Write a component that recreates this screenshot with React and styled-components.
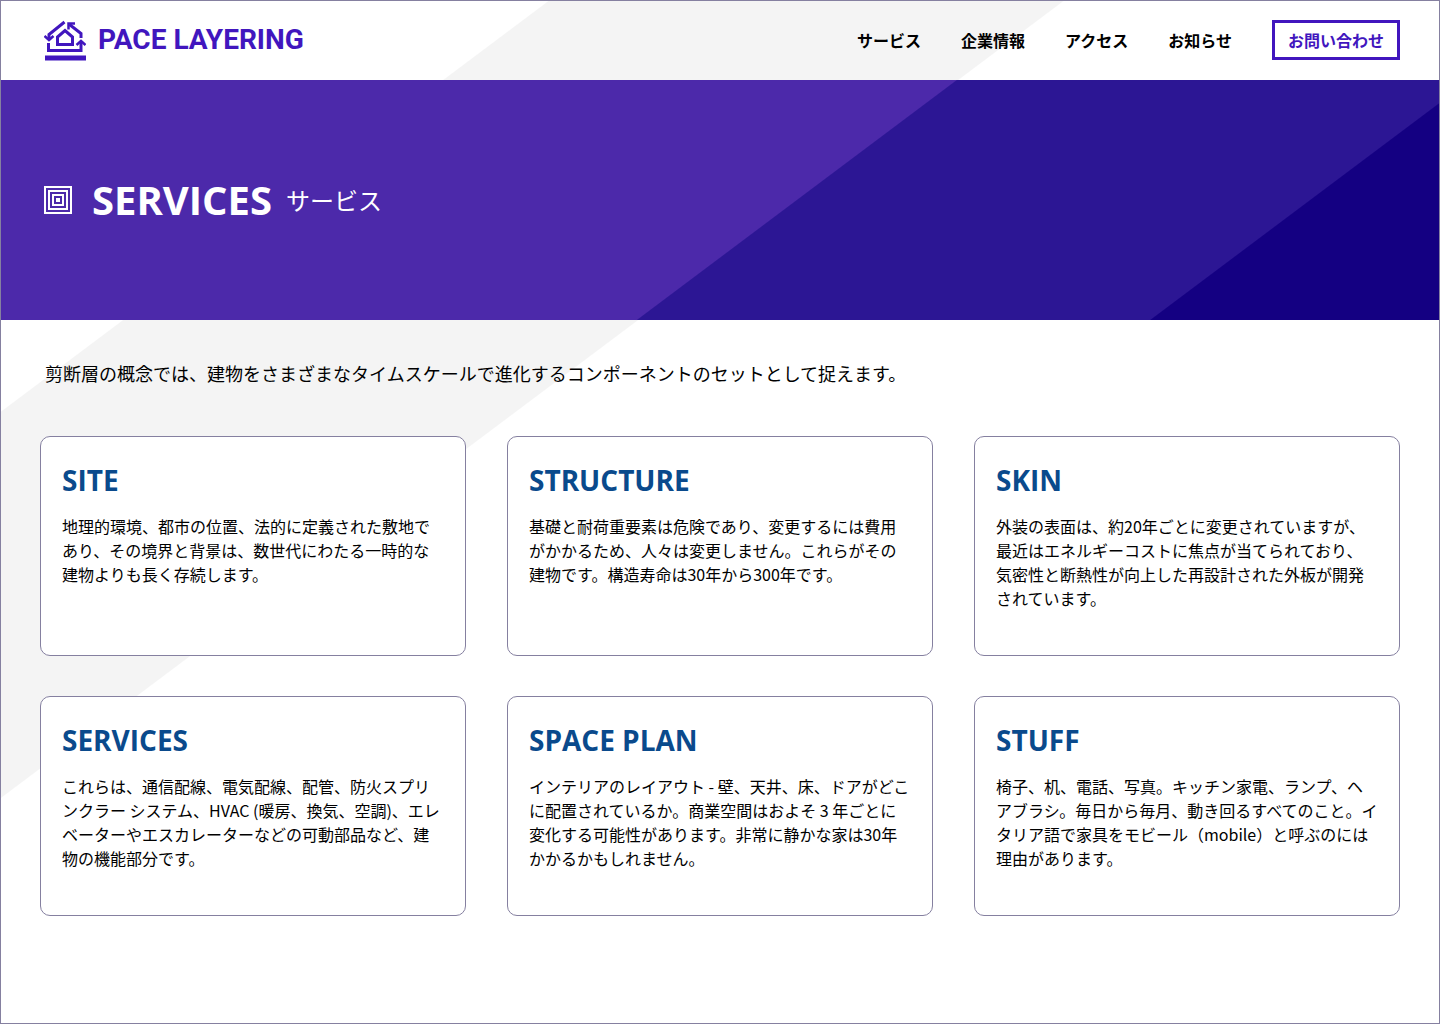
import React from "react";
import styled, { createGlobalStyle } from "styled-components";

const brand = "#4116be";
const line = "#8580a0";
const jp = `"Noto Sans CJK JP", sans-serif`;
const latin = `"Open Sans", "Noto Sans CJK JP", sans-serif`;

const GlobalStyle = createGlobalStyle`
  *, *::before, *::after { box-sizing: border-box; }
  body { margin: 0; color: #000; font-family: ${jp}; }
  h1, h2, p, ul { margin: 0; padding: 0; }
`;

const Page = styled.div`
  min-height: 100vh;
  border: 1px solid ${line};
  background: linear-gradient(
    143.13deg,
    #fff 328px,
    #f4f4f4 329px,
    #f4f4f4 637px,
    #fff 638px
  );
`;

const Header = styled.header`
  display: flex;
  align-items: center;
  justify-content: space-between;
  height: 79px;
  padding: 0 39px 1px 43px;
`;

const Brand = styled.a`
  display: flex;
  align-items: center;
  gap: 12px;
  color: ${brand};
  font: 700 28px/40px Roboto, sans-serif;
  text-decoration: none;
`;

const Nav = styled.nav`
  display: flex;
  align-items: center;
  gap: 40px;
`;

const NavList = styled.ul`
  display: flex;
  gap: 40px;
  list-style: none;
`;

const NavLink = styled.a`
  color: #000;
  font-size: 16px;
  font-weight: 700;
  line-height: 24px;
  text-decoration: none;
`;

const ContactButton = styled.button`
  height: 40px;
  padding: 0 13px;
  border: 3px solid ${brand};
  background: #fff;
  color: ${brand};
  font: 700 16px/24px ${jp};
  cursor: pointer;
`;

const Hero = styled.section`
  display: flex;
  align-items: center;
  height: 240px;
  padding: 0 43px;
  color: #fff;
  background: linear-gradient(
    143.13deg,
    #4c29aa 573px,
    #2c1694 574px,
    #2c1694 881px,
    #140082 882px
  );
`;

const HeroTitle = styled.h1`
  margin-left: 20px;
  font: 700 40px/48px ${latin};
`;

const HeroSubtitle = styled.p`
  margin-left: 14px;
  font-size: 24px;
  line-height: 36px;
`;

const Main = styled.main`
  padding: 40px 39px;
`;

const Lead = styled.p`
  padding: 0 5px;
  font-size: 18px;
  line-height: 26px;
`;

const CardGrid = styled.div`
  display: grid;
  grid-template-columns: repeat(3, 1fr);
  gap: 40px 41px;
  margin-top: 50px;
`;

const Card = styled.article`
  min-height: 220px;
  padding: 21px;
  border: 1px solid ${line};
  border-radius: 10px;
  background: #fff;
`;

const CardTitle = styled.h2`
  color: #0a4a8c;
  font: 700 28px/44px ${latin};
`;

const CardText = styled.p`
  margin-top: 12px;
  font-size: 16px;
  line-height: 24px;
`;

const HouseLogo = () => (
  <svg width="42" height="42" viewBox="0 0 42 42" fill="none" stroke="currentColor" strokeWidth="3" aria-hidden="true">
    <path d="M13.500 25.500V18L21 11.500L28.500 18V25.500Z" />
    <path d="M20.500 3L5 15.500V20" />
    <path d="M0.500 17L5 21L9.500 17" strokeWidth="2.500" />
    <path d="M25.500 5.500L37 14.500V19" />
    <path d="M24.500 10.500V4.500H31" strokeWidth="2.500" />
    <path d="M4.500 24V31.500H37V23" />
    <path d="M32.500 26L37 22L41.500 26" strokeWidth="2.500" />
    <path d="M1 39H42" strokeWidth="5" />
  </svg>
);

const NestedSquares = () => (
  <svg width="28" height="28" viewBox="0 0 28 28" fill="none" stroke="currentColor" strokeWidth="2" aria-hidden="true">
    <path d="M1 1h26v26H1zM5 5h18v18H5zM9 9h10v10H9z" />
    <path d="M12 12h4v4h-4z" fill="currentColor" stroke="none" />
  </svg>
);

const navItems = ["サービス", "企業情報", "アクセス", "お知らせ"];

const layers = [
  { title: "SITE", text: "地理的環境、都市の位置、法的に定義された敷地であり、その境界と背景は、数世代にわたる一時的な建物よりも長く存続します。" },
  { title: "STRUCTURE", text: "基礎と耐荷重要素は危険であり、変更するには費用がかかるため、人々は変更しません。これらがその建物です。構造寿命は30年から300年です。" },
  { title: "SKIN", text: "外装の表面は、約20年ごとに変更されていますが、最近はエネルギーコストに焦点が当てられており、気密性と断熱性が向上した再設計された外板が開発されています。" },
  { title: "SERVICES", text: "これらは、通信配線、電気配線、配管、防火スプリンクラー システム、HVAC (暖房、換気、空調)、エレベーターやエスカレーターなどの可動部品など、建物の機能部分です。" },
  { title: "SPACE PLAN", text: "インテリアのレイアウト - 壁、天井、床、ドアがどこに配置されているか。商業空間はおよそ 3 年ごとに変化する可能性があります。非常に静かな家は30年かかるかもしれません。" },
  { title: "STUFF", text: "椅子、机、電話、写真。キッチン家電、ランプ、ヘアブラシ。毎日から毎月、動き回るすべてのこと。イタリア語で家具をモビール（mobile）と呼ぶのには理由があります。" },
];

export default function App() {
  return (
    <Page lang="ja">
      <GlobalStyle />
      <Header>
        <Brand href="#">
          <HouseLogo />
          PACE LAYERING
        </Brand>
        <Nav>
          <NavList>
            {navItems.map((item) => (
              <li key={item}>
                <NavLink href="#">{item}</NavLink>
              </li>
            ))}
          </NavList>
          <ContactButton type="button">お問い合わせ</ContactButton>
        </Nav>
      </Header>
      <Hero>
        <NestedSquares />
        <HeroTitle>SERVICES</HeroTitle>
        <HeroSubtitle>サービス</HeroSubtitle>
      </Hero>
      <Main>
        <Lead>剪断層の概念では、建物をさまざまなタイムスケールで進化するコンポーネントのセットとして捉えます。</Lead>
        <CardGrid>
          {layers.map((layer) => (
            <Card key={layer.title}>
              <CardTitle>{layer.title}</CardTitle>
              <CardText>{layer.text}</CardText>
            </Card>
          ))}
        </CardGrid>
      </Main>
    </Page>
  );
}
